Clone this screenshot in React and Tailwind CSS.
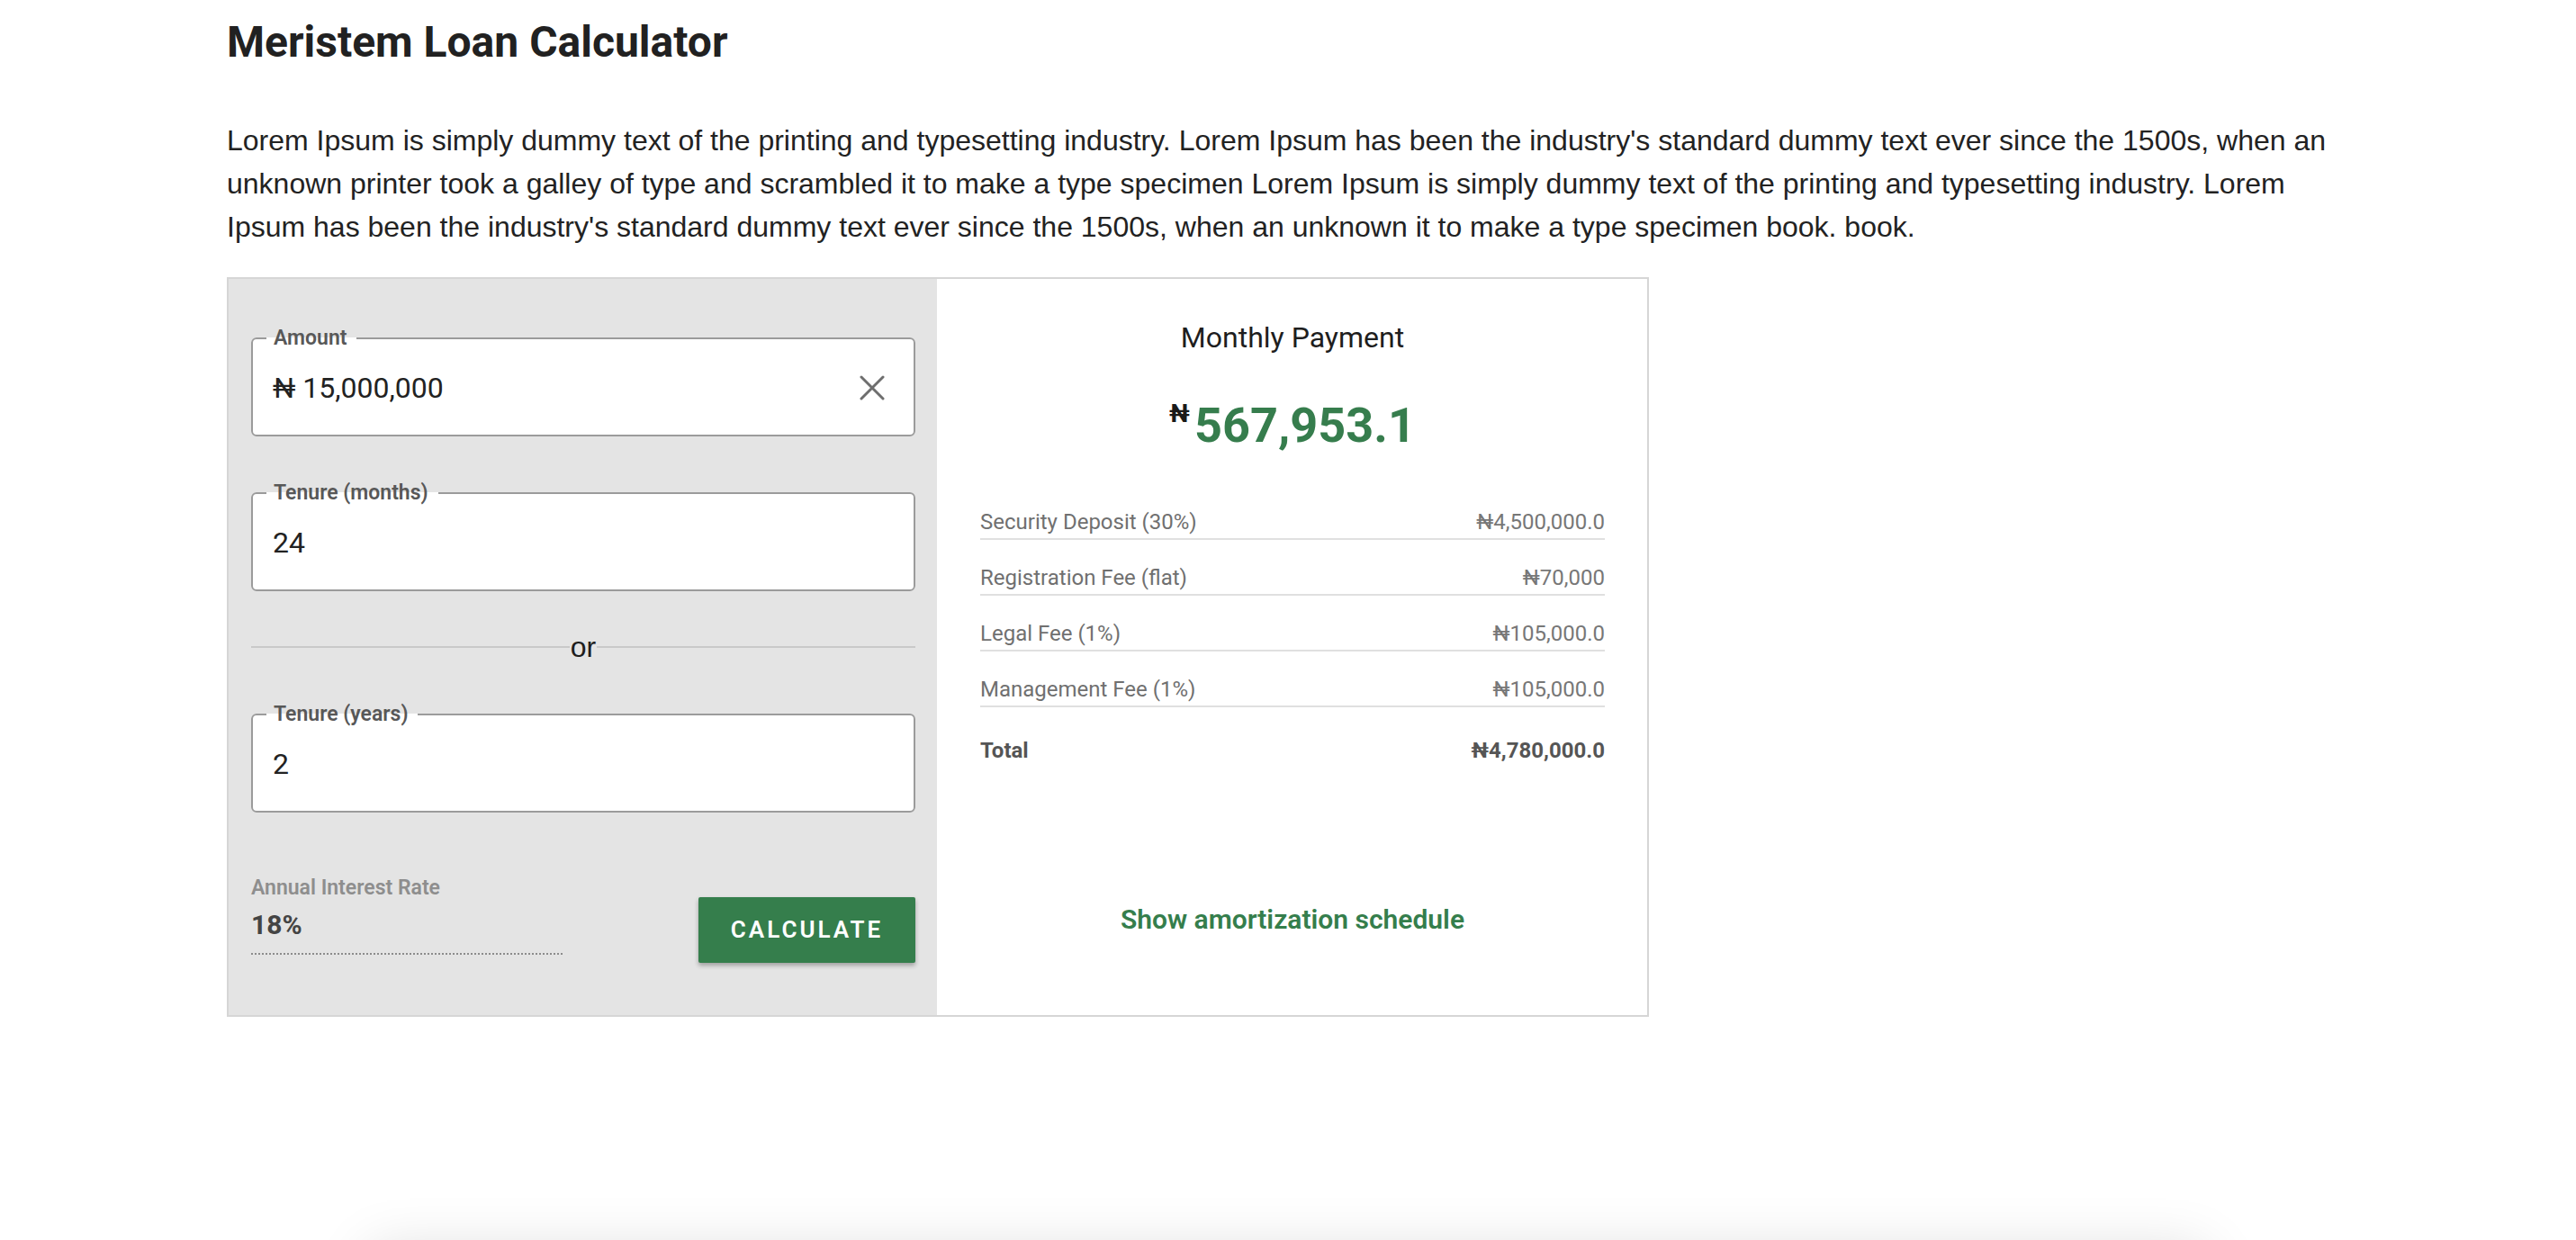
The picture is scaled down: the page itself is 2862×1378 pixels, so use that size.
import React from "react";

const fees = [
  ["Security Deposit (30%)", "₦4,500,000.0"],
  ["Registration Fee (flat)", "₦70,000"],
  ["Legal Fee (1%)", "₦105,000.0"],
  ["Management Fee (1%)", "₦105,000.0"],
];

function Field({ label, value, clearable }) {
  return (
    <fieldset className="m-0 min-w-0 rounded-md border-2 border-[#9b9b9b] bg-white px-[22px] pt-0 pb-[8px]">
      <legend className="ml-[-7px] pl-[8px] pr-[11px] text-[23px] font-semibold leading-none text-[#585858]">
        {label}
      </legend>
      <div className="flex h-[88px] items-center justify-between">
        <span className="text-[32px] text-[#222]">{value}</span>
        {clearable && (
          <svg width="28" height="28" viewBox="0 0 28 28" className="mr-[10px]">
            <path d="M2 2 26 26M26 2 2 26" stroke="#6e6e6e" strokeWidth="3" strokeLinecap="round" />
          </svg>
        )}
      </div>
    </fieldset>
  );
}

export default function App() {
  return (
    <div className="h-[1378px] overflow-hidden bg-white font-['Roboto',sans-serif]">
      <div className="mx-auto w-[2358px] pt-[23px]">
        <h1 className="text-[48px] font-bold leading-none text-[#212121]">Meristem Loan Calculator</h1>
        <p className="mt-[61px] font-['Liberation_Sans',Arial,sans-serif] text-[32px] leading-[48px] text-[#222]">
          Lorem Ipsum is simply dummy text of the printing and typesetting industry. Lorem Ipsum has been the
          industry's standard dummy text ever since the 1500s, when an unknown printer took a galley of type and
          scrambled it to make a type specimen Lorem Ipsum is simply dummy text of the printing and typesetting
          industry. Lorem Ipsum has been the industry's standard dummy text ever since the 1500s, when an unknown it
          to make a type specimen book. book.
        </p>

        <div className="mt-[32px] flex h-[822px] w-[1580px] border-2 border-[#d6d6d6]">
          {/* inputs */}
          <div className="flex w-[787px] flex-col bg-[#e4e4e4] pl-[25px] pr-[24px] pt-[54px]">
            <Field label="Amount" value="₦ 15,000,000" clearable />
            <div className="mt-[51px]">
              <Field label="Tenure (months)" value="24" />
            </div>
            <div className="mt-[42px] flex h-[40px] items-center">
              <div className="h-[2px] flex-1 bg-[#c9c9c9]" />
              <span className="px-[1px] font-['Liberation_Sans',Arial,sans-serif] text-[32px] leading-none text-[#1e1e1e]">
                or
              </span>
              <div className="h-[2px] flex-1 bg-[#c9c9c9]" />
            </div>
            <div className="mt-[43px]">
              <Field label="Tenure (years)" value="2" />
            </div>
            <div className="mt-[72px] flex items-start justify-between">
              <div className="w-[346px] border-b-2 border-dotted border-[#8c8c8c] pb-[13px]">
                <div className="text-[23px] font-semibold leading-[24px] text-[#8e8e8e]">Annual Interest Rate</div>
                <div className="mt-[11px] text-[30px] font-bold leading-[36px] text-[#444]">18%</div>
              </div>
              <button className="mt-[22px] h-[73px] w-[241px] rounded-[2px] bg-[#357e4c] text-[26px] font-semibold tracking-[3px] text-white shadow-[0_3px_5px_rgba(0,0,0,0.3)]">
                CALCULATE
              </button>
            </div>
          </div>

          {/* results */}
          <div className="flex flex-1 flex-col items-center bg-white pl-[48px] pr-[47px] pt-[46px]">
            <div className="text-[32px] leading-[38px] text-[#1e1e1e]">Monthly Payment</div>
            <div className="mt-[52px] flex items-start">
              <span className="mr-[2px] mt-[0px] w-[26px] text-[28px] font-bold leading-none text-[#1a1a1a]">₦</span>
              <span className="text-[54px] font-bold leading-none text-[#367d4d]">567,953.1</span>
            </div>
            <div className="mt-[66px] flex w-full flex-col gap-[28px] text-[24px] leading-[28px]">
              {fees.map(([name, amount]) => (
                <div key={name} className="flex justify-between border-b-2 border-[#e0e0e0] pb-[4px] text-[#707070]">
                  <span>{name}</span>
                  <span className="text-[#777]">{amount}</span>
                </div>
              ))}
              <div className="mt-[6px] flex justify-between font-bold text-[#555]">
                <span>Total</span>
                <span>₦4,780,000.0</span>
              </div>
            </div>
            <button className="mt-[156px] text-[30px] font-semibold leading-[36px] text-[#357e4c]">
              Show amortization schedule
            </button>
          </div>
        </div>
      </div>

      <div className="mx-auto mt-[260px] h-[300px] w-[2040px] bg-white shadow-[0_0_60px_rgba(0,0,0,0.14)]" />
    </div>
  );
}
